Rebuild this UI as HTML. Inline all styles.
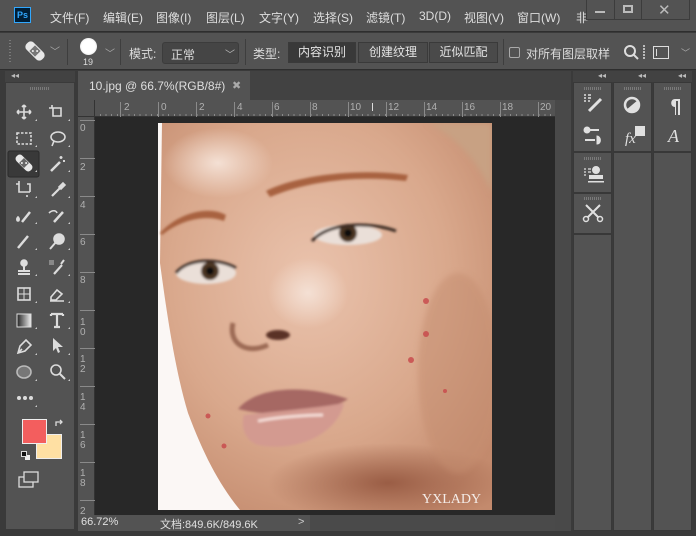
<!DOCTYPE html>
<html><head><meta charset="utf-8"><style>
*{margin:0;padding:0;box-sizing:border-box}
body{width:696px;height:536px;overflow:hidden;background:#3a3a3a;font-family:"Liberation Sans","Noto Sans CJK SC",sans-serif;color:#dcdcdc;position:relative;font-size:12px}
.a{position:absolute}
.t{position:absolute;white-space:nowrap}
.menu span{position:absolute;top:9px;font-size:12px;color:#dedede}
.btn{position:absolute;top:42px;height:21px;border:1px solid #3a3a3a;background:#4a4a4a;font-size:12px;text-align:center;line-height:19px;color:#e4e4e4}
.grip{position:absolute;height:3px;background:repeating-linear-gradient(90deg,#7a7a7a 0 1px,transparent 1px 2px)}
.rn{position:absolute;font-size:10px;color:#b0b0b0}
</style></head><body>
<div class="a" style="left:0;top:0;width:696px;height:32px;background:#535353;border-bottom:1px solid #2e2e2e"></div>
<div class="a" style="left:14px;top:7px;width:17px;height:16px;border:1px solid #31a8ff;background:#001e36;color:#31a8ff;font-size:9px;font-weight:bold;line-height:14px;text-align:center">Ps</div>
<div class="menu">
<span style="left:50px">文件(F)</span><span style="left:103px">编辑(E)</span><span style="left:156px">图像(I)</span><span style="left:206px">图层(L)</span><span style="left:259px">文字(Y)</span><span style="left:313px">选择(S)</span><span style="left:366px">滤镜(T)</span><span style="left:419px">3D(D)</span><span style="left:464px">视图(V)</span><span style="left:517px">窗口(W)</span><span style="left:576px">非</span>
</div>
<div class="a" style="left:586px;top:0;width:104px;height:20px;border:1px solid #3c3c3c;border-top:none;background:#535353"></div>
<div class="a" style="left:614px;top:0;width:1px;height:20px;background:#3c3c3c"></div>
<div class="a" style="left:641px;top:0;width:1px;height:20px;background:#3c3c3c"></div>
<div class="a" style="left:595px;top:11px;width:10px;height:2px;background:#bbb"></div>
<div class="a" style="left:623px;top:5px;width:10px;height:8px;border:2px solid #bbb"></div>
<div class="t" style="left:658px;top:1px;font-size:15px;color:#bbb">✕</div>
<div class="a" style="left:0;top:33px;width:696px;height:37px;background:#535353;border-bottom:1px solid #2e2e2e"></div>
<div class="a" style="left:9px;top:40px;width:2px;height:24px;background:repeating-linear-gradient(#7a7a7a 0 1px,transparent 1px 3px)"></div>
<svg class="a" style="left:24px;top:38px" width="22" height="26" viewBox="0 0 22 26"><g transform="rotate(-45 11 13)"><rect x="6" y="2" width="10" height="22" rx="4" fill="#e8e8e8"/><rect x="7" y="9" width="8" height="8" fill="#777"/><circle cx="9.5" cy="11.5" r="1" fill="#eee"/><circle cx="12.5" cy="14.5" r="1" fill="#eee"/></g></svg>
<div class="t" style="left:50px;top:43px;font-size:10px;color:#aaa">﹀</div>
<div class="a" style="left:67px;top:39px;width:1px;height:26px;background:#3e3e3e"></div>
<div class="a" style="left:80px;top:38px;width:17px;height:17px;border-radius:50%;background:radial-gradient(circle,#fff 55%,#ccc 100%)"></div>
<div class="t" style="left:83px;top:57px;font-size:9px;color:#ddd">19</div>
<div class="t" style="left:105px;top:45px;font-size:10px;color:#aaa">﹀</div>
<div class="a" style="left:120px;top:39px;width:1px;height:26px;background:#3e3e3e"></div>
<div class="t" style="left:129px;top:45px">模式:</div>
<div class="a" style="left:162px;top:42px;width:77px;height:22px;border:1px solid #3c3c3c;border-radius:3px;background:#454545"></div>
<div class="t" style="left:171px;top:46px">正常</div>
<div class="t" style="left:225px;top:46px;font-size:10px;color:#bbb">﹀</div>
<div class="a" style="left:245px;top:39px;width:1px;height:26px;background:#3e3e3e"></div>
<div class="t" style="left:253px;top:45px">类型:</div>
<div class="btn" style="left:288px;width:68px;background:#393939">内容识别</div>
<div class="btn" style="left:358px;width:70px">创建纹理</div>
<div class="btn" style="left:429px;width:69px">近似匹配</div>
<div class="a" style="left:503px;top:39px;width:1px;height:26px;background:#3e3e3e"></div>
<div class="a" style="left:509px;top:47px;width:11px;height:11px;border:1px solid #aaa;border-radius:2px"></div>
<div class="t" style="left:526px;top:45px">对所有图层取样</div>
<svg class="a" style="left:623px;top:44px" width="16" height="16"><circle cx="7" cy="7" r="5" fill="none" stroke="#ddd" stroke-width="2"/><line x1="11" y1="11" x2="15" y2="15" stroke="#ddd" stroke-width="2"/></svg>
<div class="a" style="left:643px;top:45px;width:2px;height:14px;background:repeating-linear-gradient(#bbb 0 2px,transparent 2px 3px)"></div>
<div class="a" style="left:653px;top:46px;width:16px;height:13px;border:1.5px solid #ddd"></div>
<div class="a" style="left:656px;top:49px;width:1px;height:7px;background:#ddd"></div>
<div class="t" style="left:681px;top:46px;font-size:9px;color:#aaa">﹀</div>
<!-- left toolbar -->
<div class="a" style="left:5px;top:71px;width:70px;height:11px;background:#424242"></div>
<div class="t" style="left:11px;top:71px;font-size:8px;color:#bbb">◂◂</div>
<div class="a" style="left:5px;top:82px;width:70px;height:448px;background:#535353;border:1px solid #3a3a3a"></div>
<div class="grip" style="left:30px;top:87px;width:20px"></div>
<svg class="a" style="left:5px;top:95px" width="70" height="400" viewBox="0 0 70 400">
<rect x="3" y="56" width="31" height="26" rx="2" fill="#393939" stroke="#2a2a2a"/>
<g fill="#d8d8d8" opacity="0.9">
<path d="M30 26h2v-2zM63 26h2v-2zM30 52h2v-2zM63 52h2v-2zM30 77h2v-2zM63 77h2v-2zM30 103h2v-2zM63 103h2v-2zM30 129h2v-2zM63 129h2v-2zM30 155h2v-2zM63 155h2v-2zM30 181h2v-2zM63 181h2v-2zM30 208h2v-2zM63 208h2v-2zM30 234h2v-2zM63 234h2v-2zM30 260h2v-2zM63 260h2v-2zM30 286h2v-2zM63 286h2v-2zM30 312h2v-2z"/>
</g>
<g fill="none" stroke="#dcdcdc" stroke-width="1.6">
<!-- row1 move / artboard -->
<g transform="translate(19 17)"><path d="M-7 0h14M0 -7v14M-7 0l2-2M-7 0l2 2M7 0l-2-2M7 0l-2 2M0 -7l-2 2M0 -7l2 2M0 7l-2-2M0 7l2-2"/></g>
<g transform="translate(52 17)"><path d="M-5 -7v3h-3M-4 -4h8v8h-8z"/></g>
<!-- row2 -->
<g transform="translate(19 43)"><rect x="-7" y="-5" width="14" height="11" stroke-dasharray="2.5 1.5"/></g>
<g transform="translate(52 43)"><ellipse cx="1" cy="-1" rx="7" ry="5"/><path d="M-3 3l-2 5"/></g>
<!-- row3 bandage / wand -->
<g transform="translate(19 68) rotate(-45)"><rect x="-4" y="-10" width="8" height="20" rx="3.5" fill="#e8e8e8" stroke="none"/><rect x="-3.5" y="-3.5" width="7" height="7" fill="#666" stroke="none"/><circle cx="-1.5" cy="-1.5" r="1" fill="#eee" stroke="none"/><circle cx="1.5" cy="1.5" r="1" fill="#eee" stroke="none"/></g>
<g transform="translate(52 68)"><path d="M-6 8l9-9" stroke-width="2.5"/><path d="M4 -7v3M2.5 -5.5h3M7 -3v2M6 -2h2"/></g>
<!-- row4 crop / eyedropper -->
<g transform="translate(19 94)"><path d="M-5 -8v11h11M-8 -5h3M3 -5h3v8M3 6v2"/></g>
<g transform="translate(52 94)"><path d="M-5 7l8-8" stroke-width="2.2"/><path d="M2 -2l4-4 2 2-4 4z" fill="#dcdcdc"/></g>
<!-- row5 spot brush / history brush -->
<g transform="translate(19 120)"><path d="M-2 7l8-10" stroke-width="2.5"/><path d="M-6 2c-2 2-1 4 0 4s2-2 0-4z" fill="#dcdcdc"/></g>
<g transform="translate(52 120)"><path d="M-3 7l9-10" stroke-width="2.5"/><path d="M-8 -2c3-3 7-3 8 0" /></g>
<!-- row6 brush / dodge -->
<g transform="translate(19 146)"><path d="M-6 7l10-12" stroke-width="2.5"/></g>
<g transform="translate(52 146)"><circle cx="2" cy="-2" r="5" fill="#dcdcdc"/><path d="M-1 1l-6 7" stroke-width="2"/></g>
<!-- row7 stamp / bg eraser -->
<g transform="translate(19 172)"><circle cx="0" cy="-4" r="3" fill="#dcdcdc"/><path d="M0 -1v4M-6 4h12M-6 7h12" stroke-width="2"/></g>
<g transform="translate(52 172)"><rect x="-8" y="-7" width="5" height="5" fill="#888" stroke="none"/><path d="M-3 7l8-9" stroke-width="2.2"/><path d="M4 -3l3-4" stroke-width="2"/></g>
<!-- row8 grid / eraser -->
<g transform="translate(19 199)"><rect x="-6" y="-6" width="12" height="12"/><path d="M-6 0h12M0 -6v12" stroke-width="1"/></g>
<g transform="translate(52 199)"><path d="M-6 3l6-7 5 4-6 6h-5zM-7 7h14"/></g>
<!-- row9 gradient / T -->
<g transform="translate(52 225)"><path d="M-6 -6h12M0 -6v13M-3 7h6M-6 -6v2M6 -6v2" stroke-width="2.2"/></g>
<!-- row10 pen / arrow -->
<g transform="translate(19 251)"><path d="M-6 7l2-7 6-6 5 5-6 6z"/><path d="M-6 7l4-4"/></g>
<g transform="translate(52 251)"><path d="M-4 -8l10 9-5 0 2 5-2 1-2-5-3 3z" fill="#dcdcdc" stroke="none"/></g>
<!-- row11 ellipse / zoom -->
<g transform="translate(19 277)"><ellipse cx="0" cy="0" rx="7" ry="6" fill="#777" stroke="#bbb"/></g>
<g transform="translate(52 277)"><circle cx="-1" cy="-2" r="5"/><path d="M3 2l5 5" stroke-width="2"/></g>
</g>
<rect x="12" y="219" width="14" height="13" fill="url(#gr)" stroke="#ddd"/>
<defs><linearGradient id="gr"><stop offset="0" stop-color="#222"/><stop offset="1" stop-color="#eee"/></linearGradient></defs>
<g fill="#dcdcdc"><circle cx="14" cy="303" r="2"/><circle cx="20" cy="303" r="2"/><circle cx="26" cy="303" r="2"/></g>
<path d="M51 331v-4h6M55 325l2 2-2 2" fill="none" stroke="#dcdcdc" stroke-width="1.3"/>
<rect x="14" y="382" width="14" height="10" fill="none" stroke="#dcdcdc" stroke-width="1.3"/><rect x="19" y="377" width="14" height="10" fill="#535353" stroke="#dcdcdc" stroke-width="1.3"/>
</svg>
<div class="a" style="left:22px;top:419px;width:25px;height:25px;background:#f35e5e;border:1px solid #eee;z-index:2"></div>
<div class="a" style="left:36px;top:434px;width:26px;height:25px;background:#ffe0a3;border:1px solid #eee"></div>
<div class="a" style="left:21px;top:451px;width:6px;height:6px;background:#111;border:1px solid #ddd;z-index:2"></div>
<div class="a" style="left:25px;top:455px;width:5px;height:5px;background:#eee"></div>
<!-- document tab bar -->
<div class="a" style="left:78px;top:71px;width:493px;height:29px;background:#424242"></div>
<div class="a" style="left:78px;top:71px;width:172px;height:29px;background:#535353"></div>
<div class="t" style="left:89px;top:79px;color:#dedede">10.jpg @ 66.7%(RGB/8#)</div>
<div class="t" style="left:232px;top:79px;color:#aaa;font-size:11px">✖</div>
<!-- rulers -->
<div class="a" style="left:78px;top:100px;width:477px;height:17px;background:#535353;border-bottom:1px solid #333;background-image:repeating-linear-gradient(90deg,transparent 0 4.7px,#8a8a8a 4.7px 5.7px);background-size:100% 3px;background-repeat:no-repeat;background-position:0 14px"></div>
<div class="a" style="left:78px;top:100px;width:17px;height:415px;background:#535353;border-right:1px solid #333"></div>
<div class="a" style="left:78px;top:100px;width:17px;height:17px;background:#535353;border-right:1px solid #333;border-bottom:1px solid #333"></div>
<div class="rn" style="left:124px;top:102px">2</div><div class="rn" style="left:161px;top:102px">0</div><div class="rn" style="left:199px;top:102px">2</div><div class="rn" style="left:237px;top:102px">4</div><div class="rn" style="left:274px;top:102px">6</div><div class="rn" style="left:312px;top:102px">8</div><div class="rn" style="left:350px;top:102px">10</div><div class="rn" style="left:388px;top:102px">12</div><div class="rn" style="left:426px;top:102px">14</div><div class="rn" style="left:464px;top:102px">16</div><div class="rn" style="left:502px;top:102px">18</div><div class="rn" style="left:540px;top:102px">20</div>
<div class="a" style="left:372px;top:103px;width:1px;height:8px;background:#ddd"></div>
<div class="a" style="left:120px;top:102px;width:1px;height:15px;background:#8a8a8a;box-shadow:38px 0 #8a8a8a,76px 0 #8a8a8a,114px 0 #8a8a8a,152px 0 #8a8a8a,190px 0 #8a8a8a,228px 0 #8a8a8a,266px 0 #8a8a8a,304px 0 #8a8a8a,342px 0 #8a8a8a,380px 0 #8a8a8a,418px 0 #8a8a8a"></div>
<div class="rn" style="left:80px;top:124px;line-height:10px">0</div><div class="rn" style="left:80px;top:162px">2</div><div class="rn" style="left:80px;top:200px">4</div><div class="rn" style="left:80px;top:237px">6</div><div class="rn" style="left:80px;top:275px">8</div>
<div class="rn" style="left:80px;top:318px;line-height:10px">1<br>0</div><div class="rn" style="left:80px;top:355px;line-height:10px">1<br>2</div><div class="rn" style="left:80px;top:393px;line-height:10px">1<br>4</div><div class="rn" style="left:80px;top:431px;line-height:10px">1<br>6</div><div class="rn" style="left:80px;top:469px;line-height:10px">1<br>8</div><div class="rn" style="left:80px;top:506px">2</div>
<div class="a" style="left:80px;top:120px;width:15px;height:1px;background:#8a8a8a;box-shadow:0 38px #8a8a8a,0 76px #8a8a8a,0 114px #8a8a8a,0 152px #8a8a8a,0 190px #8a8a8a,0 228px #8a8a8a,0 266px #8a8a8a,0 304px #8a8a8a,0 342px #8a8a8a,0 380px #8a8a8a"></div>
<!-- canvas -->
<div class="a" style="left:95px;top:117px;width:460px;height:398px;background:#282828"></div>
<div class="a" style="left:555px;top:100px;width:16px;height:431px;background:#494949"></div>
<svg class="a" style="left:158px;top:123px" width="334" height="387" viewBox="0 0 334 387">
<defs>
<radialGradient id="sk" cx="0.45" cy="0.4" r="0.7"><stop offset="0" stop-color="#eac3ad"/><stop offset="0.6" stop-color="#d9a88c"/><stop offset="1" stop-color="#c38a6d"/></radialGradient>
<radialGradient id="ch" cx="0.5" cy="0.5" r="0.5"><stop offset="0" stop-color="#9a5d45"/><stop offset="1" stop-color="#9a5d45" stop-opacity="0"/></radialGradient>
<radialGradient id="hl" cx="0.5" cy="0.5" r="0.5"><stop offset="0" stop-color="#f4e0d4"/><stop offset="1" stop-color="#f4e0d4" stop-opacity="0"/></radialGradient>
<filter id="bl"><feGaussianBlur stdDeviation="3"/></filter>
<filter id="bl2"><feGaussianBlur stdDeviation="1.2"/></filter>
</defs>
<rect width="334" height="387" fill="#fbf7f5"/>
<path d="M4 0H334V387H82C60 360 45 330 30 290C18 250 10 200 2 140Z" fill="url(#sk)"/>
<path d="M270 0H334V70C320 40 300 15 270 0Z" fill="#c8a183" filter="url(#bl)"/>
<ellipse cx="60" cy="40" rx="55" ry="35" fill="url(#hl)"/>
<ellipse cx="150" cy="170" rx="40" ry="35" fill="url(#hl)"/>
<ellipse cx="230" cy="360" rx="120" ry="40" fill="url(#ch)"/>
<ellipse cx="300" cy="250" rx="40" ry="100" fill="#c48d70" opacity="0.5" filter="url(#bl)"/>
<g filter="url(#bl2)">
<path d="M2 110C20 90 50 82 68 92L66 98C50 92 25 95 4 112Z" fill="#a8623f"/>
<path d="M108 68C140 52 200 45 250 52L248 58C200 52 150 58 112 74Z" fill="#a8623f"/>
<ellipse cx="48" cy="150" rx="30" ry="11" fill="#eadfd8"/>
<circle cx="52" cy="148" r="9" fill="#4b3424"/><circle cx="52" cy="148" r="4" fill="#111"/>
<path d="M18 150C30 135 60 135 78 145" stroke="#3a2a22" stroke-width="3" fill="none"/>
<ellipse cx="190" cy="112" rx="34" ry="10" fill="#eadfd8"/>
<circle cx="190" cy="110" r="9" fill="#4b3424"/><circle cx="190" cy="110" r="4" fill="#111"/>
<path d="M154 118C170 100 210 98 238 108" stroke="#3a2a22" stroke-width="3" fill="none"/>
<path d="M75 200C70 220 88 232 110 222" stroke="#9c6a55" stroke-width="5" fill="none"/>
<ellipse cx="120" cy="212" rx="12" ry="5" fill="#5a3025"/>
<path d="M80 286C100 262 150 262 190 276C170 290 120 296 80 286Z" fill="#a66863"/>
<path d="M86 292C120 288 160 285 186 280C180 310 140 330 100 322C88 318 82 305 86 292Z" fill="#d39a90"/>
<path d="M100 298C120 294 150 292 165 292" stroke="#f4dcd6" stroke-width="3" fill="none"/>
</g>
<g fill="#c8474a" opacity="0.8"><circle cx="268" cy="178" r="3"/><circle cx="268" cy="211" r="3"/><circle cx="253" cy="237" r="3"/><circle cx="287" cy="268" r="2"/><circle cx="50" cy="293" r="2.5"/><circle cx="66" cy="323" r="2.5"/></g>
<text x="264" y="380" font-family="Liberation Serif,serif" font-size="14" fill="#f4ece8">YXLADY</text>
</svg>
<!-- status bar -->
<div class="a" style="left:78px;top:515px;width:477px;height:16px;background:#535353"></div>
<div class="a" style="left:310px;top:515px;width:245px;height:16px;background:#4a4a4a"></div>
<div class="t" style="left:81px;top:516px;font-size:11px;color:#e0e0e0">66.72%</div>
<div class="t" style="left:160px;top:516px;font-size:11px;color:#e0e0e0">文档:849.6K/849.6K</div>
<div class="t" style="left:298px;top:516px;font-size:11px;color:#ccc">&gt;</div>
<!-- right panels -->
<div class="a" style="left:573px;top:71px;width:119px;height:11px;background:#424242"></div>
<div class="t" style="left:598px;top:71px;font-size:8px;color:#bbb">◂◂</div>
<div class="t" style="left:638px;top:71px;font-size:8px;color:#bbb">◂◂</div>
<div class="t" style="left:678px;top:71px;font-size:8px;color:#bbb">◂◂</div>
<div class="a" style="left:573px;top:82px;width:39px;height:70px;background:#535353;border:1px solid #383838"></div>
<div class="a" style="left:573px;top:152px;width:39px;height:41px;background:#535353;border:1px solid #383838"></div>
<div class="a" style="left:573px;top:193px;width:39px;height:41px;background:#535353;border:1px solid #383838"></div>
<div class="a" style="left:573px;top:234px;width:39px;height:297px;background:#535353;border:1px solid #383838"></div>
<div class="a" style="left:613px;top:82px;width:39px;height:70px;background:#535353;border:1px solid #383838"></div>
<div class="a" style="left:613px;top:152px;width:39px;height:379px;background:#535353;border:1px solid #383838"></div>
<div class="a" style="left:653px;top:82px;width:39px;height:70px;background:#535353;border:1px solid #383838"></div>
<div class="a" style="left:653px;top:152px;width:39px;height:379px;background:#535353;border:1px solid #383838"></div>
<div class="grip" style="left:584px;top:87px;width:17px"></div><div class="grip" style="left:624px;top:87px;width:17px"></div><div class="grip" style="left:664px;top:87px;width:17px"></div>
<div class="grip" style="left:584px;top:157px;width:17px"></div><div class="grip" style="left:584px;top:197px;width:17px"></div>
<svg class="a" style="left:573px;top:82px" width="120" height="150" fill="#e0e0e0" stroke="#e0e0e0">
<g stroke-width="1.5"><path d="M11 13h2M11 16h2M11 19h2M15 13h3M15 16h3M15 19h2"/><path d="M16 29l12-12" stroke-width="3"/>
<path d="M11 48h15M12 58h10" stroke-width="2"/></g>
<circle cx="14" cy="48" r="3"/><path d="M24 54c4 0 5 8 0 8z"/>
<g stroke-width="1.3"><path d="M11 87h2M11 90h2M11 93h2M15 87h3M15 90h3"/></g>
<circle cx="23" cy="88" r="3.5"/><rect x="16" y="93" width="14" height="4" stroke="none"/><rect x="15" y="99" width="16" height="1.5" stroke="none"/>
<path d="M13 123l14 14M27 123l-14 14" stroke-width="2" fill="none"/><circle cx="27" cy="137" r="2.5" fill="#535353" stroke-width="1.5"/><circle cx="13" cy="137" r="2.5" fill="#535353" stroke-width="1.5"/>
<circle cx="59" cy="23" r="7" fill="#535353" stroke-width="2.5"/><path d="M53 28L65 18A7 7 0 0 1 53 28Z" stroke="none"/>
<rect x="62" y="44" width="10" height="10" stroke="none"/>
<text x="52" y="61" font-family="Liberation Serif,serif" font-style="italic" font-size="15" stroke="none">fx</text>
<path d="M99 17h8v16h-2v-14h-2v14h-1v-8c-5 0-5-8 0-8z" stroke="none"/>
<text x="95" y="60" font-family="Liberation Serif,serif" font-style="italic" font-size="18" stroke="none">A</text>
</svg>
</body></html>
